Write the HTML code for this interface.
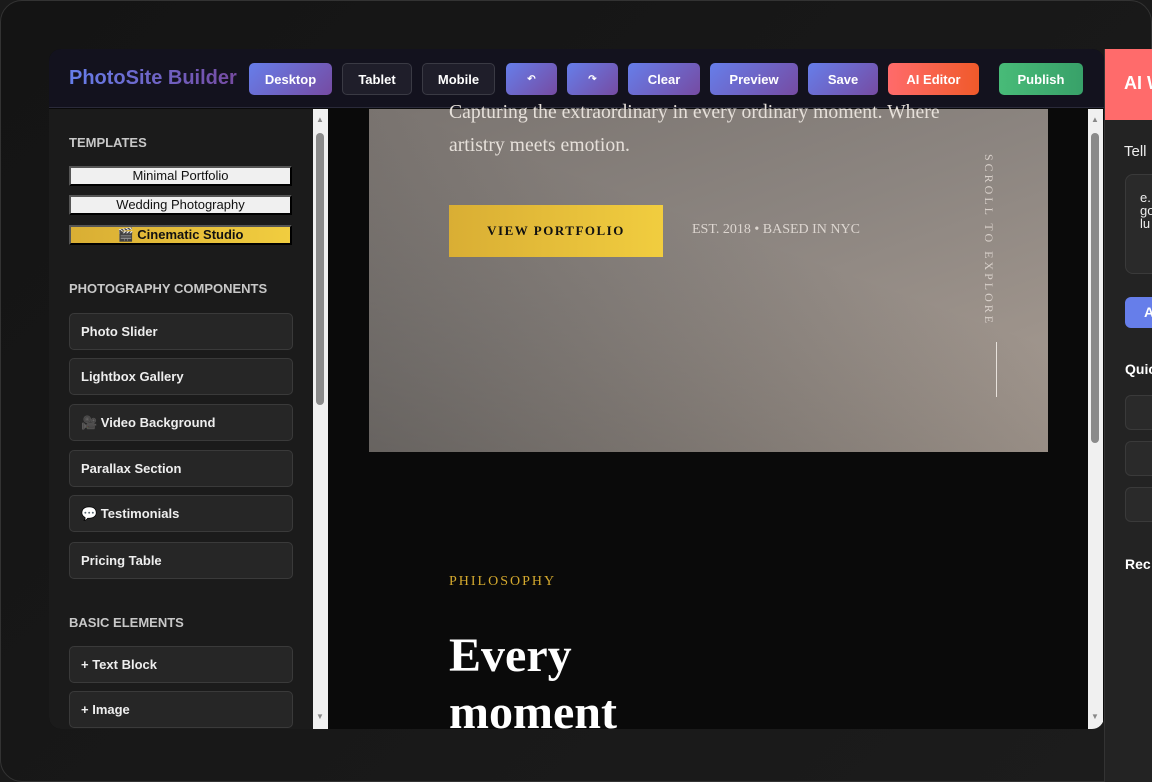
<!DOCTYPE html>
<html><head><style>
*{box-sizing:border-box;margin:0;padding:0}
body{width:1152px;height:782px;overflow:hidden;background:#1a1a1a;font-family:"Liberation Sans",sans-serif;position:relative}
.frame{position:absolute;inset:0;border-radius:22px;border:1px solid #333;background:linear-gradient(135deg,#141414,#1c1c1c)}
.app{position:absolute;left:49px;top:49px;width:1055px;height:680px;border-radius:12px;overflow:hidden;background:#0a0a0a}
.hdr{position:absolute;left:0;top:0;width:1055px;height:59px;background:#13121e;border-bottom:1px solid #2a2a3a}
.logo{position:absolute;left:20px;top:18px;font-size:20px;font-weight:bold;background:linear-gradient(90deg,#667eea,#764ba2);-webkit-background-clip:text;color:transparent}
.b{position:absolute;top:14px;height:32px;border-radius:5px;color:#fff;font-size:13px;font-weight:bold;display:flex;align-items:center;justify-content:center}
.p{background:linear-gradient(135deg,#667eea,#764ba2)}
.d{background:#1f1e2a;border:1px solid #3a3a44}
.side{position:absolute;left:0;top:60px;width:264px;height:620px;background:#1b1b1b}
.sb{position:absolute;top:60px;width:15px;height:620px;background:#f0f0f0}
.thumb{position:absolute;left:3px;width:8px;background:#8a8a8a;border-radius:4px}
.h{position:absolute;left:20px;font-size:13px;font-weight:bold;color:#c8c8c8}
.t{position:absolute;left:20px;width:223px;height:20px;background:#f0f0f0;border:2px solid #555;border-right-color:#000;border-bottom-color:#000;font-size:13px;color:#111;text-align:center;line-height:16px}
.it{position:absolute;left:20px;width:224px;height:37px;background:#262626;border:1px solid #3a3a3a;border-radius:5px;color:#eee;font-size:13px;font-weight:bold;padding-left:11px;line-height:35px}
.hero{position:absolute;left:320px;top:60px;width:679px;height:343px;background:linear-gradient(160deg,#7a7470 0%,#8c8580 45%,#a89c92 100%)}
.hero:after{content:"";position:absolute;inset:0;background:linear-gradient(20deg,rgba(60,60,60,.5),rgba(0,0,0,0) 60%)}
.ser{font-family:"Liberation Serif",serif}
</style></head><body>
<div class="frame"></div>
<div class="app">
 <div class="hero">
  <div class="ser" style="position:absolute;left:80px;top:-13px;font-size:19.7px;color:#e6e0da;line-height:33px;z-index:2">Capturing the extraordinary in every ordinary moment. Where<br>artistry meets emotion.</div>
  <div class="ser" style="position:absolute;left:80px;top:96px;width:214px;height:52px;background:linear-gradient(90deg,#d9ae34,#f1cd3f);z-index:2;font-size:13px;font-weight:bold;letter-spacing:1.5px;color:#111;text-align:center;line-height:52px">VIEW PORTFOLIO</div>
  <div class="ser" style="position:absolute;left:323px;top:113px;font-size:14px;color:#ddd6d0;z-index:2">EST. 2018 • BASED IN NYC</div>
  <div class="ser" style="position:absolute;left:612px;top:45px;writing-mode:vertical-rl;font-size:12px;letter-spacing:3px;color:#d8d0ca;z-index:2">SCROLL TO EXPLORE</div>
  <div style="position:absolute;left:627px;top:233px;width:1px;height:55px;background:#e8e2dc;z-index:2"></div>
 </div>
 <div class="ser" style="position:absolute;left:400px;top:525px;font-size:14px;letter-spacing:2px;color:#d4a92e">PHILOSOPHY</div>
 <div class="ser" style="position:absolute;left:400px;top:578px;font-size:48px;font-weight:bold;color:#fff;line-height:57px">Every<br>moment</div>
 <div class="side">
  <div class="h" style="top:26px">TEMPLATES</div>
  <div class="t" style="top:57px">Minimal Portfolio</div>
  <div class="t" style="top:86px">Wedding Photography</div>
  <div class="t" style="top:116px;background:linear-gradient(90deg,#d9ae34,#f1cd3f);font-weight:bold">🎬 Cinematic Studio</div>
  <div class="h" style="top:172px">PHOTOGRAPHY COMPONENTS</div>
  <div class="it" style="top:204px">Photo Slider</div>
  <div class="it" style="top:249px">Lightbox Gallery</div>
  <div class="it" style="top:295px">🎥 Video Background</div>
  <div class="it" style="top:341px">Parallax Section</div>
  <div class="it" style="top:386px">💬 Testimonials</div>
  <div class="it" style="top:433px">Pricing Table</div>
  <div class="h" style="top:506px">BASIC ELEMENTS</div>
  <div class="it" style="top:537px">+ Text Block</div>
  <div class="it" style="top:582px">+ Image</div>
 </div>
 <div class="sb" style="left:264px"><div class="thumb" style="top:24px;height:272px"></div><div style="position:absolute;left:3px;top:6px;font-size:8px;color:#888">▲</div><div style="position:absolute;left:3px;top:603px;font-size:8px;color:#888">▼</div></div>
 <div class="sb" style="left:1039px"><div class="thumb" style="top:24px;height:310px"></div><div style="position:absolute;left:3px;top:6px;font-size:8px;color:#888">▲</div><div style="position:absolute;left:3px;top:603px;font-size:8px;color:#888">▼</div></div>
 <div class="hdr">
  <div class="logo">PhotoSite Builder</div>
  <div class="b p" style="left:200px;width:83px">Desktop</div>
  <div class="b d" style="left:293px;width:70px">Tablet</div>
  <div class="b d" style="left:373px;width:73px">Mobile</div>
  <div class="b p" style="left:457px;width:51px;font-size:10px">↶</div>
  <div class="b p" style="left:518px;width:51px;font-size:10px">↷</div>
  <div class="b p" style="left:579px;width:72px">Clear</div>
  <div class="b p" style="left:661px;width:88px">Preview</div>
  <div class="b p" style="left:759px;width:70px">Save</div>
  <div class="b" style="left:839px;width:91px;background:linear-gradient(90deg,#ff6b6b,#f05a2a)">AI Editor</div>
  <div class="b" style="left:950px;width:84px;background:linear-gradient(90deg,#48bb78,#38a169)">Publish</div>
 </div>
</div>
<div style="position:absolute;left:1104px;top:49px;width:48px;height:733px;background:#232323;border-left:1px solid #333">
 <div style="height:71px;background:#ff6b6b;color:#fff;font-size:18px;font-weight:bold;padding:24px 0 0 19px;white-space:nowrap;overflow:hidden">AI W</div>
 <div style="position:absolute;left:19px;top:94px;color:#eee;font-size:15px">Tell</div>
 <div style="position:absolute;left:20px;top:125px;width:40px;height:100px;border:1px solid #3a3a3a;border-radius:8px;background:#2a2a2a;color:#eee;font-size:13px;padding:16px 0 0 14px;line-height:13px;overflow:hidden">e.<br>go<br>lu</div>
 <div style="position:absolute;left:20px;top:248px;width:40px;height:31px;border-radius:6px;background:#667eea;color:#fff;font-size:14px;font-weight:bold;padding:7px 0 0 19px">A</div>
 <div style="position:absolute;left:20px;top:312px;color:#fff;font-size:14px;font-weight:bold">Quic</div>
 <div style="position:absolute;left:20px;top:346px;width:40px;height:35px;border:1px solid #3a3a3a;border-radius:6px;background:#2a2a2a"></div>
 <div style="position:absolute;left:20px;top:392px;width:40px;height:35px;border:1px solid #3a3a3a;border-radius:6px;background:#2a2a2a"></div>
 <div style="position:absolute;left:20px;top:438px;width:40px;height:35px;border:1px solid #3a3a3a;border-radius:6px;background:#2a2a2a"></div>
 <div style="position:absolute;left:20px;top:507px;color:#fff;font-size:14px;font-weight:bold">Rec</div>
</div>
</body></html>
